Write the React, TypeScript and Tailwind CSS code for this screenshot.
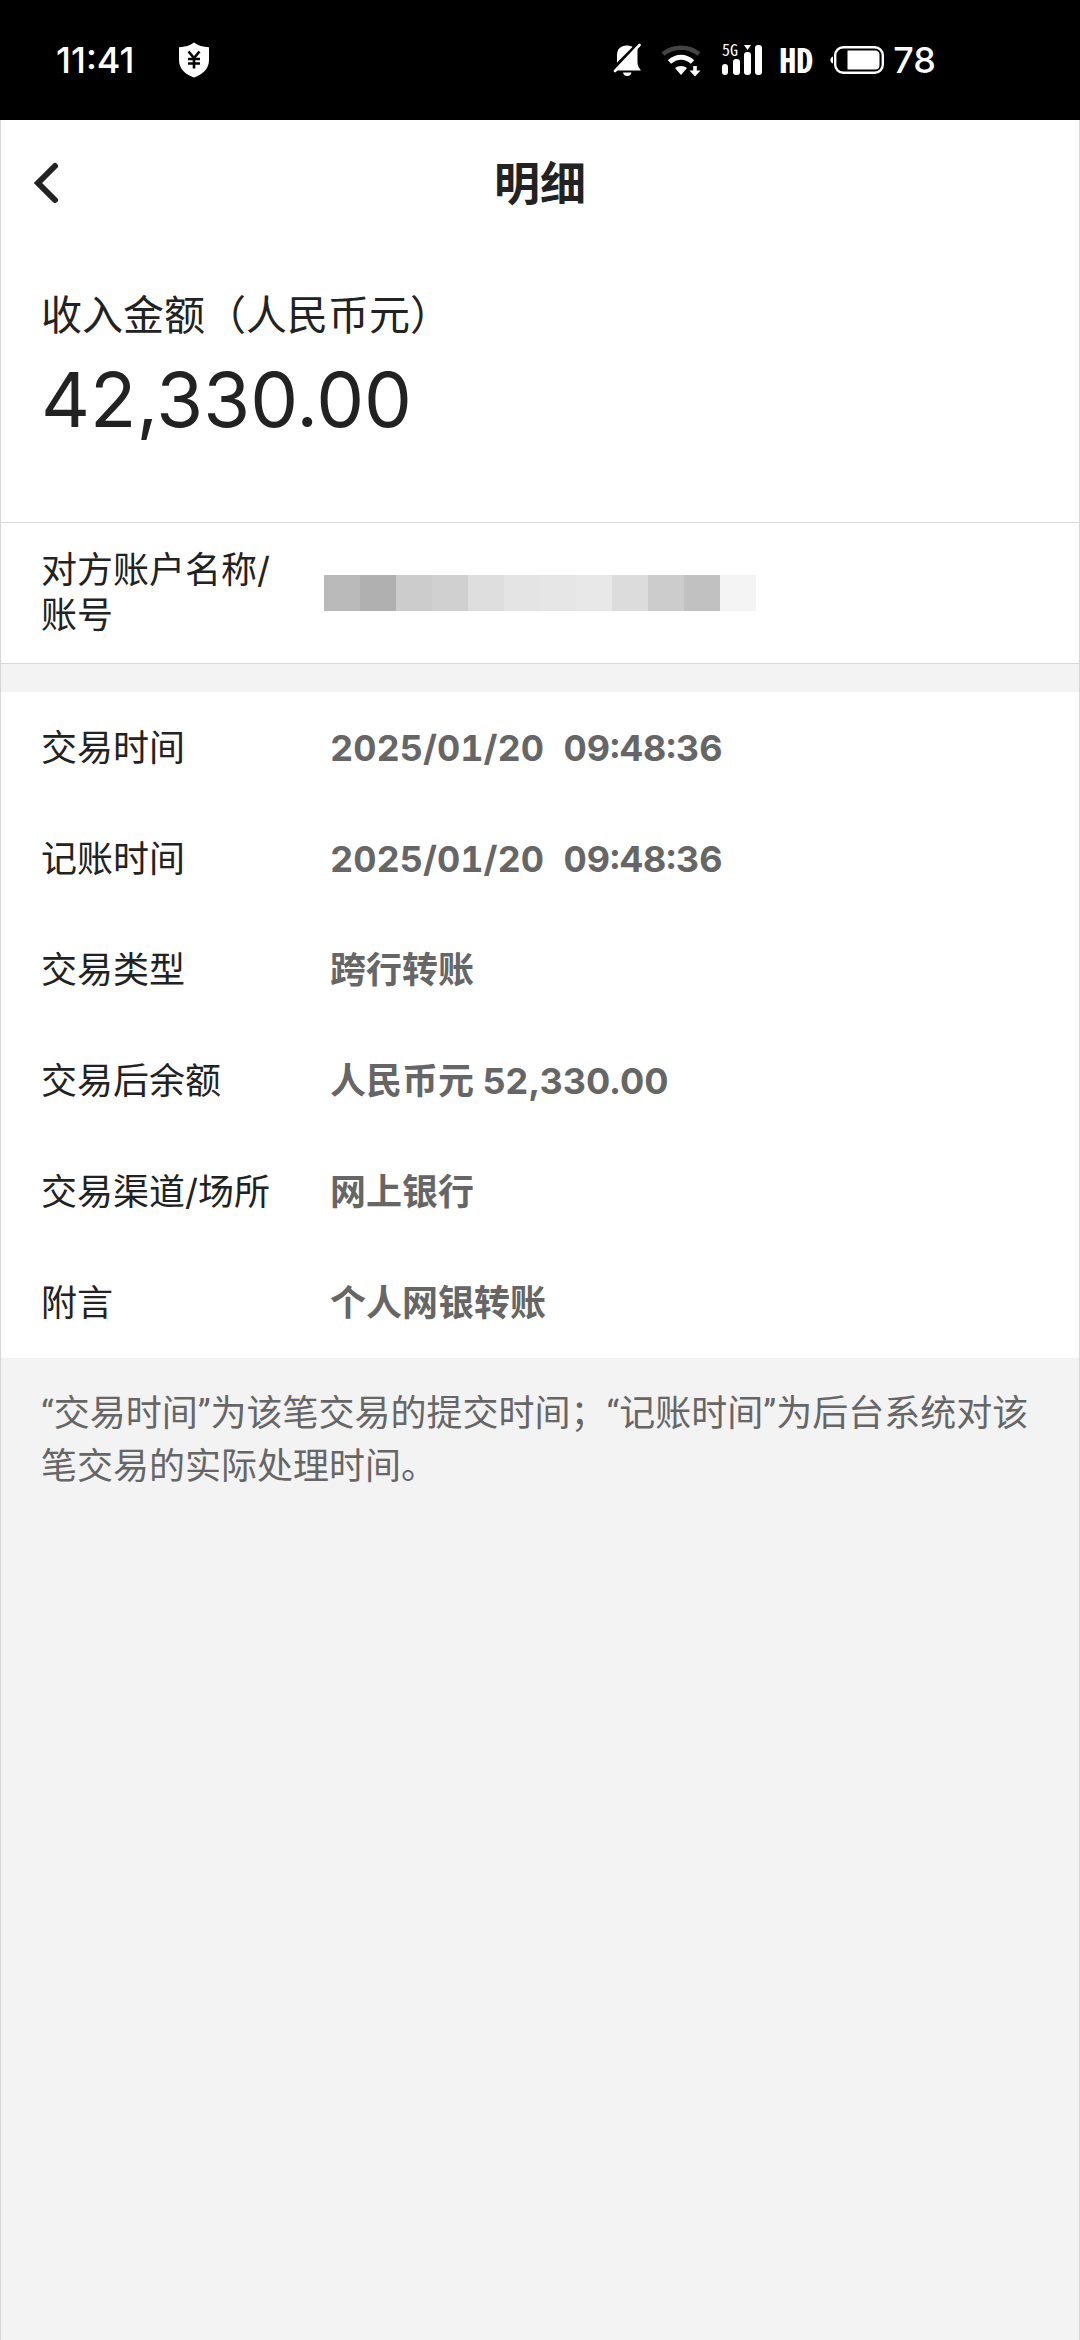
type Detail = { label: string; value: string; isTime?: boolean };

const details: Detail[] = [
  { label: "交易时间", value: "2025/01/20\u00a0 09:48:36", isTime: true },
  { label: "记账时间", value: "2025/01/20\u00a0 09:48:36", isTime: true },
  { label: "交易类型", value: "跨行转账" },
  { label: "交易后余额", value: "人民币元 52,330.00" },
  { label: "交易渠道/场所", value: "网上银行" },
  { label: "附言", value: "个人网银转账" },
];

const maskBlocks = [
  "bg-[#bababa]",
  "bg-[#b0b0b0]",
  "bg-[#cccccc]",
  "bg-[#d0d0d0]",
  "bg-[#dedede]",
  "bg-[#e4e4e4]",
  "bg-[#e6e6e6]",
  "bg-[#e8e8e8]",
  "bg-[#dcdcdc]",
  "bg-[#cccccc]",
  "bg-[#c1c1c1]",
  "bg-[#f4f4f4]",
];

function BackIcon() {
  return (
    <svg aria-hidden viewBox="0 0 28 44" className="h-11 w-7">
      <path
        d="M22 5L5 22L22 39"
        fill="none"
        stroke="currentColor"
        strokeWidth="6"
        strokeLinecap="round"
      />
    </svg>
  );
}

function ShieldIcon() {
  return (
    <svg aria-hidden viewBox="0 0 32 36" className="h-9 w-8">
      <path
        d="M16 0.5C20 3.5 25 5 31 5.2V18C31 27 24.5 32.5 16 35.5C7.5 32.5 1 27 1 18V5.2C7 5 12 3.5 16 0.5Z"
        fill="#fff"
      />
      <path
        d="M10.5 9.5L16 16L21.5 9.5M10 17H22M10 21.5H22M16 16V26.5"
        fill="none"
        stroke="#000"
        strokeWidth="2.6"
      />
    </svg>
  );
}

function BellOffIcon() {
  return (
    <svg aria-hidden viewBox="0 0 28 36" className="h-9 w-7">
      <path
        d="M4 20.5V13C4 7 8 3.5 13.5 3.5C16 3.5 18 4 19.5 5Z"
        fill="#fff"
      />
      <path
        d="M24.5 6V20C24.5 23.5 25.5 25.5 27.5 27.5V28.5H3Z"
        fill="#fff"
      />
      <path d="M2 29L26.5 3" stroke="#fff" strokeWidth="2.6" strokeLinecap="round" />
      <path d="M10 30.5H18.5C18 33 16.5 34 14.2 34C12 34 10.5 33 10 30.5Z" fill="#fff" />
    </svg>
  );
}

function WifiIcon() {
  return (
    <svg aria-hidden viewBox="0 0 40 36" className="h-9 w-10">
      <path
        d="M2 12C12 3.5 28 3.5 38 12"
        fill="none"
        stroke="#444"
        strokeWidth="4.5"
      />
      <path
        d="M8.5 20C15.5 13.5 24.5 13.5 31.5 20"
        fill="none"
        stroke="#fff"
        strokeWidth="5"
      />
      <path d="M14 26C17.5 23.3 22.5 23.3 26 26L20 33Z" fill="#fff" />
      <path d="M32.2 24H35.8V28.5H39.5L34 34.5L28.5 28.5H32.2Z" fill="#fff" />
    </svg>
  );
}

function SignalIcon() {
  return (
    <svg aria-hidden viewBox="0 0 42 36" className="h-9 w-[42px] overflow-visible">
      <text
        x="1"
        y="14"
        fill="#fff"
        className="font-['Noto_Sans_Mono_CJK_SC','Liberation_Mono',monospace] text-[16px]"
      >
        5G
      </text>
      <g fill="#fff">
        <rect x="1" y="22" width="6" height="11" rx="3" />
        <rect x="12" y="17" width="7" height="16" rx="3" />
        <rect x="23" y="10" width="7" height="23" rx="3" />
        <path d="M23 3H30L26.5 8Z" />
        <rect x="34" y="3" width="7" height="30" rx="3" />
      </g>
    </svg>
  );
}

function BatteryIcon() {
  return (
    <svg aria-hidden viewBox="0 0 56 36" className="h-9 w-14">
      <path d="M4 14.5C0.5 15.5 0.5 20.5 4 21.5Z" fill="#fff" />
      <rect x="6.2" y="5.2" width="47.6" height="25.6" rx="8" fill="none" stroke="#fff" strokeWidth="2.4" />
      <path d="M18.5 8.5H46C49 8.5 50.5 10 50.5 13V23C50.5 26 49 27.5 46 27.5H18.5Z" fill="#fff" />
    </svg>
  );
}

function StatusBar() {
  return (
    <div className="flex h-[120px] items-center justify-between bg-black pr-36 pl-14 text-[36px] font-medium text-white">
      <div className="flex items-center gap-11">
        <span>11:41</span>
        <ShieldIcon />
      </div>
      <div className="flex items-center gap-4">
        <div className="flex items-center gap-5">
          <BellOffIcon />
          <WifiIcon />
          <SignalIcon />
        </div>
        <span className="pb-1 font-['Noto_Sans_Mono_CJK_SC','Liberation_Sans_Narrow',monospace] text-[34px] font-bold">
          HD
        </span>
        <div className="flex items-center gap-2">
          <BatteryIcon />
          <span>78</span>
        </div>
      </div>
    </div>
  );
}

export default function App() {
  return (
    <div
      lang="zh-CN"
      className="flex min-h-screen flex-col bg-[#f3f3f3] font-[Inter,'Noto_Sans_CJK_SC',sans-serif] text-[36px] text-[#222]"
    >
      <StatusBar />
      <div className="grow border-x border-[#d6d6d6]">
        <header className="grid h-[126px] grid-cols-[96px_1fr_96px] items-center bg-white">
          <button type="button" aria-label="返回" className="flex h-full items-center pl-8">
            <BackIcon />
          </button>
          <h1 className="text-center text-[46px] font-bold">明细</h1>
        </header>

        <main>
          <section className="bg-white px-10 pt-10 pb-[76px]">
            <p className="text-[41px] leading-[58px]">收入金额（人民币元）</p>
            <p className="mt-2 text-[76px] leading-[94px]">42,330.00</p>
          </section>

          <section className="flex h-[142px] items-center border-y border-[#d9d9d9] bg-white px-10">
            <span className="w-[283px] pr-10 leading-[45px]">对方账户名称/账号</span>
            <span role="img" aria-label="已隐藏" className="flex">
              {maskBlocks.map((shade, index) => (
                <span key={index} className={`size-9 ${shade}`} />
              ))}
            </span>
          </section>

          <dl className="mt-7 bg-white px-10">
            {details.map((item) => (
              <div key={item.label} className="flex h-[111px] items-center">
                <dt className="w-[289px]">{item.label}</dt>
                <dd className="font-bold text-[#666]">
                  {item.isTime ? (
                    <time className="tabular-nums">{item.value}</time>
                  ) : (
                    item.value
                  )}
                </dd>
              </div>
            ))}
          </dl>

          <p className="px-10 pt-[30px] font-[Roboto,'Noto_Sans_CJK_SC',sans-serif] leading-[53px] text-[#666]">
            “交易时间”为该笔交易的提交时间；“记账时间”为后台系统对该笔交易的实际处理时间。
          </p>
        </main>
      </div>
    </div>
  );
}
